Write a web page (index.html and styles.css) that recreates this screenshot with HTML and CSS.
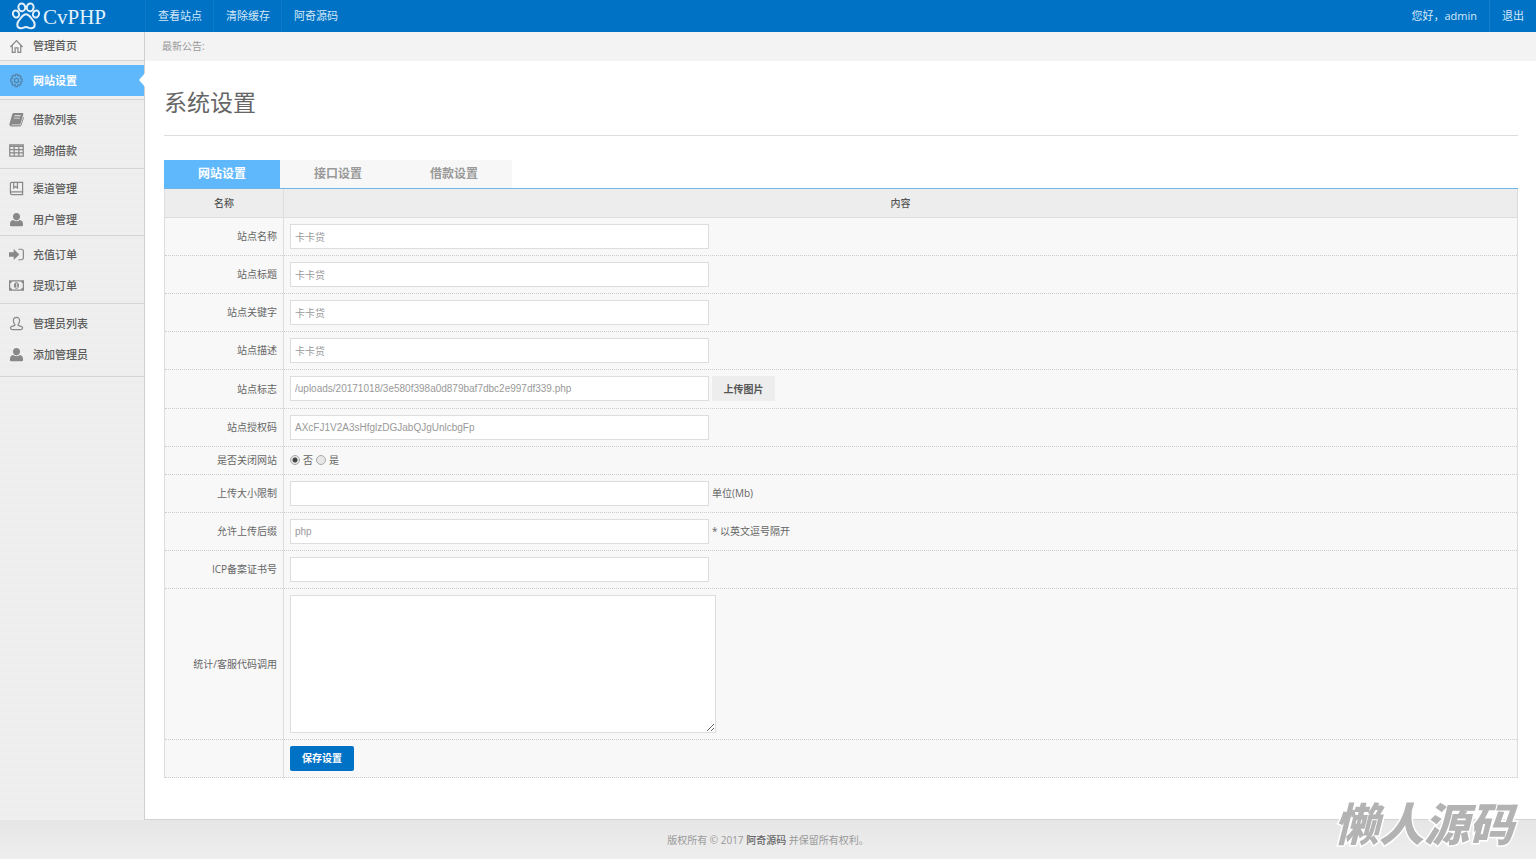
FILE: index.html
```html
<!DOCTYPE html>
<html lang="zh-CN">
<head>
<meta charset="utf-8">
<title>系统设置</title>
<link rel="stylesheet" href="styles.css">
</head>
<body>
<header class="topbar">
  <a class="logo" href="#">
    <svg class="logo-paw" viewBox="0 0 28 28" aria-hidden="true">
      <ellipse cx="4" cy="12" rx="3" ry="3.600" transform="rotate(-20 4 12)"/>
      <ellipse cx="9.800" cy="5.400" rx="3.400" ry="3.900" transform="rotate(-8 9.800 5.400)"/>
      <ellipse cx="18.200" cy="5.400" rx="3.400" ry="3.900" transform="rotate(8 18.200 5.400)"/>
      <ellipse cx="24" cy="12" rx="3" ry="3.600" transform="rotate(20 24 12)"/>
      <path d="M14 12.200c-3.200 0-4.200 3-6 4.900-1.600 1.700-2.700 3.200-2.700 5.400 0 2.400 1.700 3.800 3.700 3.800 2.200 0 3-1.300 5-1.300s2.800 1.300 5 1.300c2 0 3.700-1.400 3.700-3.800 0-2.200-1.100-3.700-2.700-5.400-1.800-1.900-2.800-4.900-6-4.900z"/>
    </svg>
    <span>CvPHP</span>
  </a>
  <nav class="top-links">
    <a href="#">查看站点</a>
    <a href="#">清除缓存</a>
    <a href="#">阿奇源码</a>
  </nav>
  <div class="top-user">
    <span>您好，admin</span>
    <a href="#">退出</a>
  </div>
</header>

<div class="body">
  <aside class="sidebar">
    <ul class="group group-home">
      <li><a href="#"><svg class="line" viewBox="0 0 16 16"><path d="M1.500 8.500 8 1.800l6.500 6.700M3.500 7v7.300h3V9.500h3v4.800h3V7"/></svg>管理首页</a></li>
    </ul>
    <ul class="group group-site">
      <li><a class="active" href="#"><svg class="line" viewBox="0 0 16 16"><circle cx="8" cy="8" r="2.200"/><path d="M6.800 1.500h2.400l.4 1.800 1.600-.9 1.800 1.700-1 1.700 2 .8v2.500l-2 .7 1 1.800-1.700 1.700-1.800-1-.4 2.200H6.800l-.5-2.200-1.800 1-1.600-1.700.9-1.800-1.900-.7V6.600l1.900-.8-.9-1.700 1.600-1.700 1.800.9z"/></svg>网站设置</a></li>
    </ul>
    <ul class="group">
      <li><a href="#"><svg viewBox="0 0 16 16"><path fill-rule="evenodd" d="M5 1h9.200c.9 0 1.400.7 1.100 1.500l-2.900 9.700c-.2.700-.7 1-1.400 1H3.300c-.9 0-.9.900 0 .9h8.200c.6 0 .9-.2 1.100-.8L15.300 5c.6.400.7.900.5 1.600l-2.500 7.600c-.3.800-.9 1.200-1.700 1.200H3c-1.900 0-3-1.500-2.400-3.200L3.500 2.300C3.800 1.400 4.300 1 5 1zm1 2.500-.3 1h6.500l.3-1zM5.300 6 5 7h6.500l.3-1z"/></svg>借款列表</a></li>
      <li><a href="#"><svg class="line" viewBox="0 0 16 16"><path d="M.8 2h14.400v12H.8zM.8 3.500h14.400M.8 7h14.400M.8 10.500h14.400M5.500 3v11M10.500 3v11"/></svg>逾期借款</a></li>
    </ul>
    <ul class="group group-tight">
      <li><a href="#"><svg class="line" viewBox="0 0 16 16"><path d="M14.500 11.500V1.500H3C1.800 1.500 1.500 2.300 1.500 3v10M14.500 11.500H3c-2 0-2 3 0 3h11.500v-3M5 1.500v6l2-1.500 2 1.500v-6"/></svg>渠道管理</a></li>
      <li><a href="#"><svg viewBox="0 0 16 16"><path d="M8 1c2.200 0 3.800 1.600 3.800 3.800S10.200 9 8 9 4.200 7 4.200 4.800 5.800 1 8 1zM4.500 8.500c2 1.700 5 1.700 7 0 2.300.2 3.500 2 3.500 5 0 1-.7 1.800-2 1.800H3c-1.300 0-2-.8-2-1.800 0-3 1.200-4.800 3.500-5z"/></svg>用户管理</a></li>
    </ul>
    <ul class="group group-orders">
      <li><a href="#"><svg viewBox="0 0 16 16"><path d="M0 5.500h5V2.200L11 8l-6 5.800v-3.300H0zM10 1.800h3c1.900 0 3 1.100 3 3v6.400c0 1.900-1.100 3-3 3h-3V13h3c1.100 0 1.700-.7 1.700-1.800V4.800c0-1.100-.6-1.800-1.700-1.800h-3z"/></svg>充值订单</a></li>
      <li><a href="#"><svg viewBox="0 0 16 16"><path fill-rule="evenodd" d="M0 2.500h16v11H0zm1.300 3v5c1 0 1.700.7 1.700 1.700h10c0-1 .7-1.700 1.700-1.700v-5c-1 0-1.700-.7-1.700-1.700H3c0 1-.7 1.700-1.700 1.700zM8 4.500c1.600 0 2.700 1.500 2.700 3.500s-1.100 3.500-2.700 3.500S5.300 10 5.300 8 6.400 4.500 8 4.500zM7 6.700l.8-.1v3H7v.8h2.300v-.8h-.5V5.500h-.7z"/></svg>提现订单</a></li>
    </ul>
    <ul class="group group-last">
      <li><a href="#"><svg class="line" viewBox="0 0 16 16"><path d="M8 1.500c-2 0-3.300 1.400-3.300 3.500C4.700 7 5.300 8 6.200 8.900v1.200c-2.500.6-4.700 1-4.700 2.500 0 1.200.6 1.900 2 1.900h9c1.400 0 2-.7 2-1.900 0-1.500-2.200-1.900-4.700-2.500V8.900c.9-.9 1.500-1.900 1.500-3.900 0-2.100-1.300-3.500-3.300-3.500z"/></svg>管理员列表</a></li>
      <li><a href="#"><svg viewBox="0 0 16 16"><path d="M8 1c2.200 0 3.800 1.600 3.800 3.800S10.200 9 8 9 4.200 7 4.200 4.800 5.800 1 8 1zM4.500 8.500c2 1.700 5 1.700 7 0 2.300.2 3.500 2 3.500 5 0 1-.7 1.800-2 1.800H3c-1.300 0-2-.8-2-1.800 0-3 1.200-4.800 3.500-5z"/></svg>添加管理员</a></li>
    </ul>
  </aside>

  <main class="main">
    <p class="notice">最新公告:</p>
    <div class="content">
      <h1 class="title">系统设置</h1>
      <div class="tabs" role="tablist">
        <button class="tab tab-on" type="button" role="tab" aria-selected="true">网站设置</button>
        <button class="tab" type="button" role="tab" aria-selected="false">接口设置</button>
        <button class="tab" type="button" role="tab" aria-selected="false">借款设置</button>
      </div>
      <form>
        <table class="settings">
          <thead>
            <tr><th class="col-name" scope="col">名称</th><th scope="col">内容</th></tr>
          </thead>
          <tbody>
            <tr><th scope="row"><label for="name">站点名称</label></th><td><div class="field"><input class="text" id="name" type="text" value="卡卡贷"></div></td></tr>
            <tr><th scope="row"><label for="heading">站点标题</label></th><td><div class="field"><input class="text" id="heading" type="text" value="卡卡贷"></div></td></tr>
            <tr><th scope="row"><label for="keywords">站点关键字</label></th><td><div class="field"><input class="text" id="keywords" type="text" value="卡卡贷"></div></td></tr>
            <tr><th scope="row"><label for="desc">站点描述</label></th><td><div class="field"><input class="text" id="desc" type="text" value="卡卡贷"></div></td></tr>
            <tr class="row-upload"><th scope="row"><label for="mark">站点标志</label></th><td><div class="field"><input class="text" id="mark" type="text" value="/uploads/20171018/3e580f398a0d879baf7dbc2e997df339.php"><button class="upload" type="button">上传图片</button></div></td></tr>
            <tr><th scope="row"><label for="license">站点授权码</label></th><td><div class="field"><input class="text" id="license" type="text" value="AXcFJ1V2A3sHfglzDGJabQJgUnlcbgFp"></div></td></tr>
            <tr><th scope="row">是否关闭网站</th><td><div class="field choices"><label><input type="radio" name="closed" checked>否</label><label><input type="radio" name="closed">是</label></div></td></tr>
            <tr><th scope="row"><label for="size">上传大小限制</label></th><td><div class="field"><input class="text" id="size" type="text"><span class="hint">单位(Mb)</span></div></td></tr>
            <tr><th scope="row"><label for="ext">允许上传后缀</label></th><td><div class="field"><input class="text" id="ext" type="text" value="php"><span class="hint">* 以英文逗号隔开</span></div></td></tr>
            <tr><th scope="row"><label for="icp">ICP备案证书号</label></th><td><div class="field"><input class="text" id="icp" type="text"></div></td></tr>
            <tr class="row-code"><th scope="row"><label for="code">统计/客服代码调用</label></th><td><div class="field"><textarea class="code" id="code"></textarea></div></td></tr>
            <tr class="row-save"><th></th><td><div class="field"><button class="save" type="submit">保存设置</button></div></td></tr>
          </tbody>
        </table>
      </form>
    </div>
  </main>
</div>

<footer class="footer">版权所有 © 2017 <a href="#">阿奇源码</a> 并保留所有权利。</footer>
<div class="watermark">懒人源码</div>
</body>
</html>
```

FILE: styles.css
```css
* { box-sizing: border-box; }

body {
  margin: 0;
  min-height: 100vh;
  display: flex;
  flex-direction: column;
  background: #ededed;
  color: #666;
  font: 10px/16px "Open Sans", "Noto Sans CJK SC", sans-serif;
}

a { color: inherit; text-decoration: none; }
button, input, textarea { font: inherit; color: inherit; margin: 0; }
button { border: 0; padding: 0; cursor: pointer; }

/* Top bar */
.topbar {
  display: flex;
  height: 32px;
  background: #0072c6;
  color: #d5e9f8;
  font-size: 11px;
  line-height: 32px;
}
.logo {
  width: 145px;
  padding: 2px 0 0 12px;
  display: flex;
  gap: 3px;
  color: #e4f1fb;
  font: 21px/30px "Liberation Serif", serif;
}
.logo-paw { width: 28px; height: 28px; fill: none; stroke: #e4f1fb; stroke-width: 2; }
.top-links, .top-user { display: flex; }
.top-links a { padding: 0 12px; border-left: 1px solid #0f7acb; width: 68px; white-space: nowrap; }
.top-user { margin-left: auto; }
.top-user > * { padding: 0 12px; }
.top-user a { border-left: 1px solid #1b80cc; }

/* Sidebar */
.body { flex: 1; display: flex; }
.sidebar {
  width: 145px;
  flex: none;
  border-right: 1px solid #d0d0d0;
  background: repeating-linear-gradient(#efefef 0 4px, #ededed 4px 8px);
}
.group { list-style: none; margin: 0; padding: 4px 0 2px; border-bottom: 1px solid #d4d4d4; }
.group-home { padding: 0; background: #f4f4f4; }
.group-site { padding-bottom: 3px; }
.group-tight { padding-bottom: 0; }
.group-orders { padding-top: 3px; }
.group-last { padding-bottom: 6px; }
.sidebar a {
  display: flex;
  align-items: center;
  gap: 9px;
  height: 31px;
  padding-left: 9px;
  font-size: 11px;
  font-weight: 500;
  color: #5c5c5c;
}
.sidebar .group-home a { height: 28px; }
.sidebar svg { width: 15px; height: 15px; fill: #888; }
.sidebar svg.line { fill: none; stroke: #888; stroke-width: 1.300; }
.sidebar .active {
  position: relative;
  background: #5fb8fb;
  color: #fff;
  font-weight: 700;
}
.sidebar .active svg.line { stroke: #5683a8; }
.sidebar .active::after {
  content: "";
  position: absolute;
  right: -1px;
  top: 8px;
  border: 7px solid transparent;
  border-left-width: 0;
  border-right: 6px solid #fff;
}

/* Content */
.main { flex: 1; min-width: 0; background: #fff; border-bottom: 1px solid #d4d4d4; }
.notice { margin: 0; padding: 0 17px; background: #f3f3f3; color: #999; line-height: 29px; }
.content { padding: 23px 18px 40px 19px; }
.title {
  margin: 0 0 24px;
  padding-bottom: 15px;
  border-bottom: 1px solid #ddd;
  color: #666;
  font-size: 23px;
  font-weight: 400;
  line-height: 36px;
}
.tabs { display: flex; border-bottom: 1px solid #6fb7ea; }
.tab {
  width: 116px;
  height: 28px;
  background: #f7f7f7;
  color: #999;
  font-size: 12px;
  font-weight: 700;
}
.tab-on { background: #5fb8fb; color: #fff; }

.settings { width: 100%; border-collapse: collapse; table-layout: fixed; background: #f8f8f8; }
.settings th, .settings td {
  height: 28px;
  padding: 0 6px;
  border: 1px solid #ddd;
  border-top: 0;
}
.settings tbody th { font-weight: 400; text-align: right; }
.settings tbody th, .settings tbody td { border-bottom-style: dotted; border-bottom-color: #ccc; }
.settings thead th { background: #ededed; font-weight: 500; color: #555; }
.settings .col-name { width: 119px; }

.field { display: flex; align-items: center; gap: 3px; }
.text, .code {
  background: #fff;
  border: 1px solid #ddd;
  color: #999;
  font-family: "Liberation Sans", "Noto Sans CJK SC", sans-serif;
}
.text { width: 419px; height: 25px; margin: 6px 0; padding: 0 4px; }
.code { width: 426px; height: 138px; margin: 6px 0; padding: 4px; resize: both; }
.upload { width: 63px; height: 25px; background: #ededed; color: #555; font-weight: 700; }
.settings .row-upload td { height: 39px; }
.settings .row-code td { height: 151px; }
.save { width: 64px; height: 25px; margin: 6px 0; border-radius: 2px; background: #0072c6; color: #fff; font-weight: 700; }
.choices label { display: flex; align-items: center; gap: 3px; }
.choices input {
  appearance: none;
  width: 10px;
  height: 10px;
  border: 1px solid #aaa;
  border-radius: 50%;
  background: #e8e8e8;
}
.choices input:checked { background: radial-gradient(circle, #444 0 2px, #e8e8e8 3px); }

/* Footer */
.footer {
  height: 39px;
  text-align: center;
  line-height: 40px;
  color: #999;
  background: linear-gradient(#e6e6e6, #eee);
}
.footer a { color: #666; font-weight: 500; }

.watermark {
  position: fixed;
  right: 22px;
  bottom: 9px;
  color: #b3b3b3;
  font: italic 900 45px/56px "Noto Sans CJK SC", sans-serif;
  -webkit-text-stroke: 3px #fff;
  paint-order: stroke fill;
  pointer-events: none;
}
```
